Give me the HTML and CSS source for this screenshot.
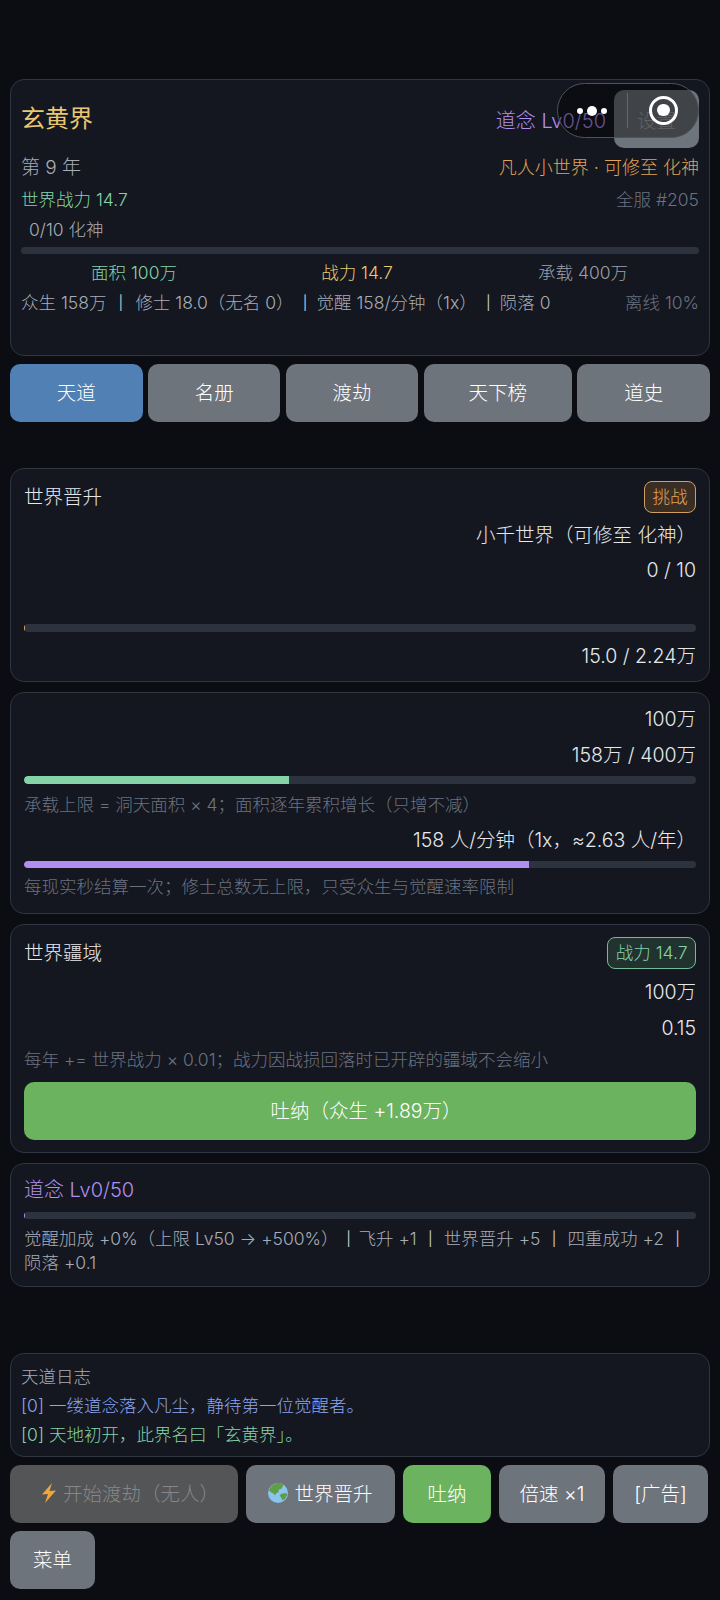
FILE: index.html
```html
<!DOCTYPE html>
<html lang="zh-CN">
<head>
<meta charset="utf-8">
<title>玄黄界</title>
<link rel="stylesheet" href="styles.css">
</head>
<body>
<div class="app">
  <section class="card head">
    <div class="row r-title">
      <span class="title">玄黄界</span>
      <div class="title-side"><span class="purple lv">道念 Lv0/50</span><button class="btn settings">设置</button></div>
    </div>
    <div class="row r-year"><span class="year">第 9 年</span><span class="orange">凡人小世界 · 可修至 化神</span></div>
    <div class="row r-power"><span class="green">世界战力 14.7</span><span class="dim">全服 #205</span></div>
    <div class="realm">0/10 化神</div>
    <div class="bar head-bar"></div>
    <div class="stats"><span class="green">面积 100万</span><span class="gold">战力 14.7</span><span class="dim2">承载 400万</span></div>
    <div class="row r-sum"><span class="soft">众生 158万<span class="sep">|</span>修士 18.0（无名 0）<span class="sep sep-p">|</span>觉醒 158/分钟（1x）<span class="sep sep-p">|</span>陨落 0</span><span class="dim">离线 10%</span></div>
  </section>

  <nav class="tabs">
    <button class="btn tab active t1">天道</button>
    <button class="btn tab t1">名册</button>
    <button class="btn tab t1">渡劫</button>
    <button class="btn tab t2">天下榜</button>
    <button class="btn tab t1">道史</button>
  </nav>

  <section class="card p1">
    <div class="row"><span class="ptitle">世界晋升</span><span class="tag tag-o">挑战</span></div>
    <div class="val v-first">小千世界（可修至 化神）</div>
    <div class="val">0 / 10</div>
    <div class="bar thin-gap"><div class="fill f-tick-o"></div></div>
    <div class="val v-after">15.0 / 2.24万</div>
  </section>

  <section class="card p2">
    <div class="val">100万</div>
    <div class="val">158万 / 400万</div>
    <div class="bar b-pop"><div class="fill f-green"></div></div>
    <div class="hint h-a">承载上限 = 洞天面积 × 4；面积逐年累积增长（只增不减）</div>
    <div class="val">158 人/分钟（1x，≈2.63 人/年）</div>
    <div class="bar b-rate"><div class="fill f-purple"></div></div>
    <div class="hint h-b">每现实秒结算一次；修士总数无上限，只受众生与觉醒速率限制</div>
  </section>

  <section class="card p3">
    <div class="row"><span class="ptitle">世界疆域</span><span class="tag tag-g">战力 14.7</span></div>
    <div class="val v-first3">100万</div>
    <div class="val">0.15</div>
    <div class="hint h-c">每年 += 世界战力 × 0.01；战力因战损回落时已开辟的疆域不会缩小</div>
    <button class="btn wide green-btn">吐纳（众生 +1.89万）</button>
  </section>

  <section class="card p4">
    <div class="purple p4-title">道念 Lv0/50</div>
    <div class="bar b-dao"><div class="fill f-tick-p"></div></div>
    <div class="note">觉醒加成 +0%（上限 Lv50 → +500%）<span class="sep sep-n1">|</span>飞升 +1<span class="sep sep-n">|</span>世界晋升 +5<span class="sep sep-n">|</span>四重成功 +2<span class="sep sep-n">|</span><span class="nb">陨落 +0.1</span></div>
  </section>

  <section class="card log">
    <div class="log-title">天道日志</div>
    <div class="log-line blue">[0] 一缕道念落入凡尘，静待第一位觉醒者。</div>
    <div class="log-line green">[0] 天地初开，此界名曰「玄黄界」。</div>
  </section>

  <div class="actions">
    <button class="btn a-start"><svg class="bolt" viewBox="0 0 16 20"><path d="M11 0 1 11.500l6-.5L4 20l11-12.500-6.500.5z" fill="#f0a63c"/></svg><span>开始渡劫（无人）</span></button>
    <button class="btn a-up"><svg class="globe" viewBox="0 0 24 24"><circle cx="12" cy="12" r="12" fill="#8cc4f0"/><path d="M3 5C5.500 2 9 0 12 0c2 0 4 .4 5.500 1.300L18 4l-2 3-3 1-.5 3-3 1.500-1 2.500-2-2.500L3.500 11 1 9z" fill="#5f9e48"/><path d="M14 15l2-2 6-1 1 2-2.500 5-3 2-1.500-3z" fill="#5f9e48"/></svg><span>世界晋升</span></button>
    <button class="btn a-tu green-btn">吐纳</button>
    <button class="btn a-sp">倍速 ×1</button>
    <button class="btn a-ad">[广告]</button>
    <button class="btn a-menu">菜单</button>
  </div>
</div>

<div class="capsule">
  <div class="dots"><i class="dot"></i><i class="dot big"></i><i class="dot"></i></div>
  <div class="cap-line"></div>
  <div class="ring"><i></i></div>
</div>
</body>
</html>
```
FILE: styles.css
```css
* { box-sizing: border-box; }
html, body { margin: 0; padding: 0; }
body {
  width: 720px; height: 1600px; overflow: hidden; position: relative;
  background: #0b0d12;
  color: #e6e8ec;
  font-family: Inter, Roboto, "Noto Sans CJK SC", sans-serif;
  font-size: 19.500px;
  font-weight: 300;
  font-feature-settings: "calt" 0;
}
.app { padding: 79px 10px 0; display: flex; flex-direction: column; }
.card { background: #14171f; border: 1px solid #2f3541; border-radius: 14px; }
.row { display: flex; justify-content: space-between; align-items: center; }
button { font: inherit; border: 0; }
.btn { background: #6e747c; color: #fff; border-radius: 10px; height: 58px; padding: 0 0 3px; display: flex; align-items: center; justify-content: center; font-size: 19.500px; font-weight: 300; }

.purple { color: #b08ff0; } .orange { color: #e0a458; } .green { color: #84d4a8; }
.gold { color: #e8c872; } .dim { color: #6b7280; font-size: 17.500px; } .dim2 { color: #9aa0aa; } .soft { color: #a7adb8; }
.sep { display: inline-block; width: 29px; text-align: center; color: #c4c8cf; font-size: 14px; font-weight: 400; vertical-align: 1px; }
.sep-p { width: 23px; }
.sep-n { width: 27px; }
.sep-n1 { width: 20px; }
.nb { white-space: nowrap; }

.head { height: 277px; padding: 0 10px; font-size: 17.500px; }
.r-title { height: 72px; }
.title { color: #e8c872; font-size: 24px; font-weight: 400; }
.title-side { display: flex; align-items: center; gap: 8px; margin-top: 6px; }
.lv { font-size: 20px; }
.settings { width: 85px; color: #a5a8ad; padding: 0; }
.r-year { height: 27px; }
.r-year .orange { font-size: 18px; }
.year { font-size: 19px; color: #a7adb8; }
.r-power { height: 32px; margin-top: 3px; }
.realm { color: #a7adb8; padding-left: 8px; height: 30px; line-height: 32px; }
.bar { height: 7px; background: #2c323e; border-radius: 4px; position: relative; overflow: hidden; }
.head-bar { margin-top: 3px; }
.stats { display: grid; grid-template-columns: 226px 220px 232px; text-align: center; margin-top: 6px; height: 25px; line-height: 25px; }
.stats span { white-space: nowrap; }
.r-sum { height: 30px; margin-top: 1px; }
.r-sum .soft { white-space: nowrap; }

.tabs { display: flex; gap: 5.250px; margin-top: 8px; }
.tab { flex: 0 0 auto; }
.t1 { width: 132.600px; } .t2 { width: 148.600px; }
.active { background: #5080b4; }

.p1 { margin-top: 46px; height: 214px; padding: 12px 13px; }
.ptitle { margin-bottom: 3px; }
.tag { border-radius: 8px; font-size: 17.500px; padding: 0 7.500px; height: 32px; line-height: 29px; border: 1.500px solid; }
.tag-o { color: #e0a458; background: #3a2e24; border-color: #cf9f62; }
.tag-g { color: #84d4a8; background: #21322f; border-color: #74bb98; }
.val { text-align: right; height: 36px; line-height: 36px; white-space: nowrap; }
.v-first { margin-top: 4px; height: 35px; }
.v-first3 { margin-top: 5px; }
.thin-gap { margin-top: 36px; height: 8px; }
.v-after { margin-top: 6px; }
.fill { height: 100%; position: absolute; left: 0; top: 0; }
.f-tick-o { width: 1px; background: #e0a458; }
.f-tick-p { width: 1px; background: #b08ff0; }
.f-green { width: 39.400%; background: #84d4a8; border-radius: 4px 0 0 4px; }
.f-purple { width: 75.200%; background: #b08ff0; border-radius: 4px 0 0 4px; }

.p2 { margin-top: 10px; height: 222px; padding: 8px 13px; }
.b-pop { height: 8px; margin-top: 3px; }
.hint { color: #6b7280; font-size: 17.500px; height: 30px; line-height: 30px; white-space: nowrap; }
.h-a { margin-top: 6px; margin-bottom: 2px; }
.h-b { margin-top: 4px; }
.h-c { margin-top: -1px; }
.b-rate { margin-top: 3px; height: 7px; }

.p3 { margin-top: 10px; height: 229px; padding: 12px 13px; }
.wide { width: 100%; margin-top: 7px; padding-left: 12px; }
.green-btn { background: #6bb35e; }

.p4 { margin-top: 10px; height: 124px; padding: 12px 13px; }
.p4-title { font-size: 20px; height: 28px; line-height: 28px; }
.b-dao { margin-top: 8px; height: 7px; }
.note { color: #a7adb8; font-size: 17.500px; line-height: 23.500px; margin-top: 8px; }

.log { margin-top: 66px; height: 104px; padding: 9px 10px; font-size: 17.500px; }
.log-title { color: #a7adb8; height: 29px; line-height: 28px; }
.log-line { height: 28px; line-height: 28px; white-space: nowrap; }
.log-line.green { margin-top: 1px; }
.blue { color: #8ca5f0; }

.actions { display: flex; flex-wrap: wrap; gap: 8px; margin-top: 8px; }
.bolt { width: 16px; height: 20px; flex: none; margin-right: 6px; }
.globe { width: 20px; height: 20px; flex: none; margin-right: 6px; }
.a-start { width: 228px; background: #545557; color: #85878a; padding-left: 12px; }
.a-up { width: 149px; }
.a-tu { width: 88px; }
.a-sp { width: 106px; }
.a-ad { width: 95px; }
.a-menu { width: 85px; }

.capsule { position: absolute; left: 557px; top: 83px; width: 142px; height: 55px; border-radius: 28px; background: rgba(0,0,0,.42); border: 1.500px solid #4f5257; }
.dots { position: absolute; left: 18.500px; top: 21.500px; display: flex; align-items: center; gap: 4px; }
.dot { width: 6px; height: 6px; border-radius: 50%; background: #fff; }
.dot.big { width: 10px; height: 10px; }
.cap-line { position: absolute; left: 68.500px; top: 8.500px; width: 1.500px; height: 35px; background: #66686c; }
.ring { position: absolute; left: 91px; top: 11.500px; width: 29px; height: 29px; border: 3px solid #fff; border-radius: 50%; display: flex; align-items: center; justify-content: center; }
.ring i { width: 12.500px; height: 12.500px; background: #fff; border-radius: 50%; }
```
